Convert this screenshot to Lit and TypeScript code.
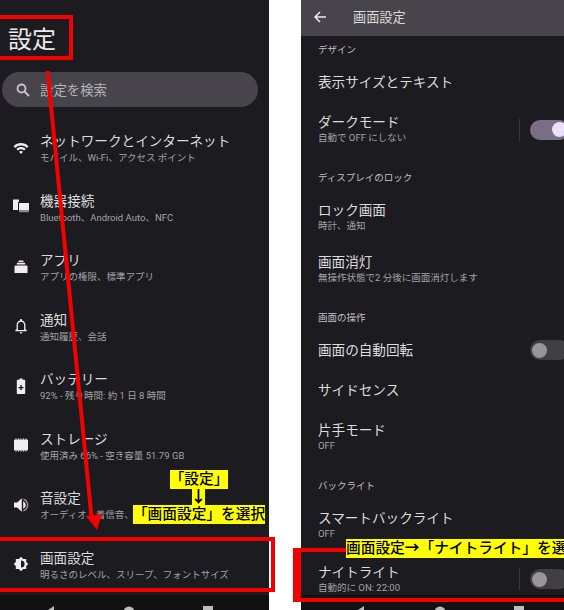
import { LitElement, html, css, svg } from "lit";
import { customElement } from "lit/decorators.js";

const icons: Record<string, unknown> = {
  wifi: svg`<path d="M1.5 7.2l1.6 1.7c3.300-3.300 8.500-3.300 11.800 0l1.600-1.700C12.300 2.900 5.700 2.900 1.500 7.200zM4.400 10l1.500 1.600c1.700-1.700 4.500-1.700 6.200 0l1.500-1.600C11 7.400 7 7.400 4.400 10zM7 12.800l2 2.200 2-2.200c-1.100-1.100-2.900-1.100-4 0z"/>`,
  devices: svg`<rect x="1" y="1.500" width="6" height="10.500"/><rect x="6" y="4" width="11" height="10" fill="#1c1b1f"/><rect x="7" y="5" width="10" height="7.500"/><rect x="7" y="13" width="10" height="1.200" opacity=".55"/>`,
  apps: svg`<path d="M2.500 8.500q0-1 1-1h11q1 0 1 1v6.500h-13zM4.800 5.300q0-.6.600-.6h7.200q.6 0 .6.600v1.200H4.800zM6.500 3q0-.6.600-.6h3.800q.6 0 .6.600v.9h-5z"/>`,
  bell: svg`<path fill-rule="evenodd" d="M9 2c-.6 0-1 .4-1 1v.6C5.800 4.100 4.600 6 4.600 8.200V12L3.200 13.400V14.300H14.800V13.400L13.400 12V8.200C13.400 6 12.200 4.100 10 3.600V3c0-.6-.4-1-1-1zM5.900 13 V8.200C5.900 6.300 7.200 4.800 9 4.800s3.100 1.500 3.100 3.400V13z"/><path d="M7.600 15.200h2.800c0 .8-.6 1.300-1.400 1.300s-1.400-.5-1.400-1.300z"/>`,
  battery: svg`<path fill-rule="evenodd" d="M7.500 1.500h3v1.300h2a.7.7 0 0 1 .700.700v12.800a.7.7 0 0 1-.700.700h-7a.7.7 0 0 1-.700-.700V3.500a.7.7 0 0 1 .700-.700h2zM8.300 8v1.900H6.500v1.300h1.800v1.900h1.400v-1.900h1.800V9.900H9.700V8z"/>`,
  storage: svg`<path d="M3 3.500h12a1 1 0 0 1 1 1v9a1 1 0 0 1-1 1H3a1 1 0 0 1-1-1v-9a1 1 0 0 1 1-1z"/><path d="M3.500 2.200h1v1.500h-1zM6 2.200h1v1.500H6zM8.500 2.200h1v1.500h-1zM11 2.200h1v1.500h-1zM13.500 2.200h1v1.500h-1zM3.500 14.300h1v1.500h-1zM6 14.300h1v1.500H6zM8.500 14.300h1v1.500h-1zM11 14.300h1v1.500h-1zM13.500 14.300h1v1.500h-1z" opacity=".8"/>`,
  sound: svg`<path d="M2 6.500v5h3.200L9.800 15.800V2.200L5.200 6.500zM11.200 5.200v7.600c1.500-.8 2.500-2.200 2.500-3.800s-1-3-2.500-3.800z"/><path d="M11.300 2.600v1.500c2.200.6 3.600 2.600 3.600 4.900s-1.400 4.300-3.600 4.900v1.500c3-.7 5-3.300 5-6.400s-2-5.700-5-6.400z" opacity=".6"/>`,
  display: svg`<path fill-rule="evenodd" d="M9 1.800l2.200 2.100h3v3L16.300 9l-2.100 2.100v3h-3L9 16.200l-2.200-2.100h-3v-3L1.700 9l2.100-2.100v-3h3zM9 5.400v7.200a3.600 3.600 0 0 0 0-7.200z"/>`,
};

const mainRows = [
  ["wifi", "ネットワークとインターネット", "モバイル、Wi-Fi、アクセス ポイント"],
  ["devices", "機器接続", "Bluetooth、Android Auto、NFC"],
  ["apps", "アプリ", "アプリの権限、標準アプリ"],
  ["bell", "通知", "通知履歴、会話"],
  ["battery", "バッテリー", "92% - 残り時間: 約 1 日 8 時間"],
  ["storage", "ストレージ", "使用済み 66% - 空き容量 51.79 GB"],
  ["sound", "音設定", "オーディオ、着信音、バイブレーション"],
  ["display", "画面設定", "明るさのレベル、スリープ、フォントサイズ"],
];

type D = { k: string; t: string; s?: string; sw?: "on" | "off"; div?: boolean };
const detail: D[] = [
  { k: "sec first", t: "デザイン" },
  { k: "one", t: "表示サイズとテキスト" },
  { k: "two", t: "ダークモード", s: "自動で OFF にしない", sw: "on", div: true },
  { k: "sec", t: "ディスプレイのロック" },
  { k: "two short", t: "ロック画面", s: "時計、通知" },
  { k: "two short", t: "画面消灯", s: "無操作状態で2 分後に画面消灯します" },
  { k: "sec wide", t: "画面の操作" },
  { k: "one", t: "画面の自動回転", sw: "off" },
  { k: "one", t: "サイドセンス" },
  { k: "two", t: "片手モード", s: "OFF" },
  { k: "sec", t: "バックライト" },
  { k: "two", t: "スマートバックライト", s: "OFF" },
  { k: "two flat", t: "ナイトライト", s: "自動的に ON: 22:00", sw: "off", div: true },
];

@customElement("app-root")
export class AppRoot extends LitElement {
  static styles = css`
    :host {
      display: block;
      position: relative;
      width: 564px;
      height: 610px;
      overflow: hidden;
      background: #fff;
      font-family: Roboto, "Noto Sans CJK JP", sans-serif;
    }
    .screens { display: flex; height: 610px; }
    .phone {
      display: flex;
      flex-direction: column;
      height: 610px;
      overflow: hidden;
      background: #1c1b1f;
      color: #e6e1e5;
    }
    .left { width: 269px; }
    .right { width: 263px; margin-left: 32px; }
    .content { flex: 1; min-height: 0; overflow: hidden; }

    .heading {
      height: 72px;
      box-sizing: border-box;
      padding: 24px 0 0 8px;
      font-size: 24px;
      line-height: 32px;
      color: #ece9ec;
    }
    .search {
      display: flex;
      align-items: center;
      height: 35px;
      margin: 0 11px 12px 2px;
      padding-left: 14px;
      gap: 10px;
      border-radius: 18px;
      background: #47454b;
      color: #b6b3b9;
      font-size: 13.400px;
    }
    .search span { padding-bottom: 2px; }
    .search svg { width: 14px; height: 14px; fill: none; stroke: #c9c6cc; stroke-width: 1.800; }
    .row {
      display: flex;
      align-items: center;
      height: 59.500px;
      padding-left: 12px;
      gap: 10px;
    }
    .row svg { width: 18px; height: 18px; margin-bottom: 2px; flex: none; fill: #f0edf0; }
    .row-text { padding-top: 1px; }
    .row-text .sub { margin-top: 1px; }
    .title { font-size: 13.600px; line-height: 17px; white-space: nowrap; color: #dedbde; }
    .sub { font-size: 9.500px; line-height: 14px; white-space: nowrap; color: #a5a2a8; }

    .nav {
      position: relative;
      height: 15px;
      flex: none;
      background: #111113;
    }
    .nav-icons {
      display: flex;
      justify-content: space-between;
      box-sizing: border-box;
      padding-top: 11px;
    }
    .left .nav-icons { padding-left: 44px; padding-right: 55px; }
    .right .nav-icons { padding-left: 53px; padding-right: 39px; }
    .nav svg { width: 12px; height: 12px; fill: #bdbdbd; display: block; }

    .toolbar {
      display: flex;
      align-items: center;
      flex: none;
      height: 36px;
      box-sizing: border-box;
      padding: 0 0 3px 12px;
      background: #47454b;
      gap: 26px;
      font-size: 13.200px;
      color: #dcd9dc;
    }
    .toolbar svg { width: 14px; height: 14px; fill: none; stroke: #eceaec; stroke-width: 1.500; }

    .item {
      display: flex;
      align-items: center;
      padding-left: 17px;
    }
    .item.sec {
      height: 26px;
      margin-top: 7px;
      font-size: 9.500px;
      color: #c4bfcc;
    }
    .item.sec.first { margin-top: 0; }
    .item.sec.wide { margin-top: 10px; }
    .item.one { height: 40px; }
    .item.two { height: 55px; }
    .item.two.flat { height: 52px; }
    .item.two.short { height: 52px; }
    .item.two.short .texts { padding-top: 3px; }
    .texts { flex: 1; min-width: 0; }
    .switch-wrap { display: flex; align-items: center; flex: none; margin-right: -5px; }
    .divider { width: 1px; height: 22px; margin-right: 10px; background: #38373b; }
    .track {
      display: flex;
      align-items: center;
      box-sizing: border-box;
      width: 39px;
      height: 20px;
      padding: 0 2px;
      border-radius: 10px;
    }
    .track.on { background: #7a6d86; justify-content: flex-end; }
    .track.off { background: #413f44; }
    .thumb { width: 15px; height: 15px; border-radius: 50%; }
    .on .thumb { background: #ebe0fb; }
    .off .thumb { background: #98969b; }

    .overlay-svg { position: absolute; left: 0; top: 0; width: 564px; height: 610px; pointer-events: none; }
    .red { position: absolute; box-sizing: border-box; border: 4px solid #f40000; }
    .r1 { left: -8px; top: 15px; width: 81px; height: 45px; }
    .r2 { left: -8px; top: 537px; width: 283px; height: 55px; }
    .r3 { left: 293px; top: 548px; width: 290px; height: 54px; border-left-width: 8px; }
    .tag {
      position: absolute;
      display: flex;
      align-items: center;
      justify-content: center;
      background: #ffff00;
      color: #000;
      font-size: 14.700px;
      font-weight: 500;
      white-space: nowrap;
      height: 19px;
      line-height: 19px;
      overflow: hidden;
    }
    .t1 { left: 170px; top: 470px; width: 58px; }
    .t2 { left: 192px; top: 489px; width: 13px; height: 16px; font-size: 13px; font-weight: 700; line-height: 16px; }
    .t2 span { display: inline-block; transform: scale(1.250); }
    .t3 { left: 133px; top: 505px; width: 132px; }
    .t4 { left: 346px; top: 539px; width: 240px; justify-content: flex-start; }
    .t4 b { font-weight: 700; }
  `;

  private rowTpl(r: string[]) {
    return html`<div class="row">
      <svg viewBox="0 0 18 18">${icons[r[0]]}</svg>
      <div class="row-text">
        <div class="title">${r[1]}</div>
        <div class="sub">${r[2]}</div>
      </div>
    </div>`;
  }

  private itemTpl(d: D) {
    if (d.k.startsWith("sec")) return html`<div class="item ${d.k}">${d.t}</div>`;
    return html`<div class="item ${d.k}">
      <div class="texts">
        <div class="title">${d.t}</div>
        ${d.s ? html`<div class="sub">${d.s}</div>` : null}
      </div>
      ${d.sw
        ? html`<div class="switch-wrap">
            ${d.div ? html`<div class="divider"></div>` : null}
            <div class="track ${d.sw}"><div class="thumb"></div></div>
          </div>`
        : null}
    </div>`;
  }

  private nav() {
    return html`<div class="nav">
      <div class="nav-icons">
        <svg viewBox="0 0 12 12"><path d="M10 0v12L1 6z" /></svg>
        <svg viewBox="0 0 12 12"><circle cx="6" cy="6" r="5.500" /></svg>
        <svg viewBox="0 0 12 12"><rect x="1" y="0" width="10" height="12" /></svg>
      </div>
    </div>`;
  }

  render() {
    return html`
      <div class="screens">
        <section class="phone left">
          <div class="content">
            <div class="heading">設定</div>
            <div class="search">
              <svg viewBox="0 0 14 14"><circle cx="5.500" cy="5.500" r="4" /><path d="M8.500 8.500L13 13" /></svg>
              <span>設定を検索</span>
            </div>
            ${mainRows.map((r) => this.rowTpl(r))}
          </div>
          ${this.nav()}
        </section>
        <section class="phone right">
          <div class="toolbar">
            <svg viewBox="0 0 14 14"><path d="M13 7H2M7 2L2 7l5 5" /></svg>
            <span>画面設定</span>
          </div>
          <div class="content">${detail.map((d) => this.itemTpl(d))}</div>
          ${this.nav()}
        </section>
      </div>

      <svg class="overlay-svg" viewBox="0 0 564 610">
        <path d="M47.600 71L91.500 517" stroke="#f40000" stroke-width="4" fill="none" />
        <path d="M86 516L102 514L97 530z" fill="#f40000" />
      </svg>
      <div class="red r1"></div>
      <div class="red r2"></div>
      <div class="red r3"></div>
      <div class="tag t1">「設定」</div>
      <div class="tag t2"><span>↓</span></div>
      <div class="tag t3">「画面設定」を選択</div>
      <div class="tag t4">画面設定<b>→</b>「ナイトライト」を選択</div>
    `;
  }
}
